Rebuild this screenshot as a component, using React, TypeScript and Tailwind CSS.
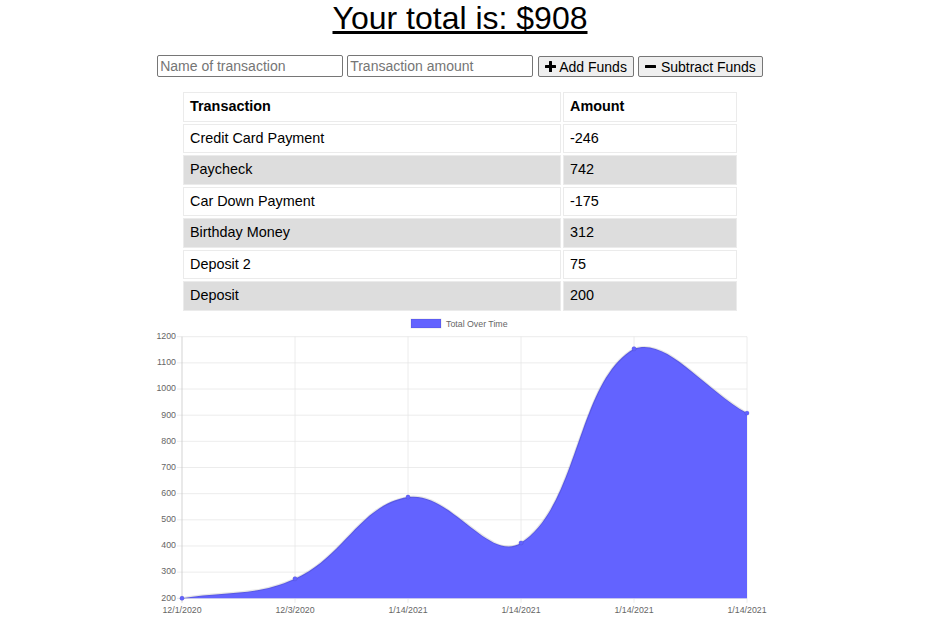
import React from "react";

const rows: [string, string][] = [
  ["Credit Card Payment", "-246"],
  ["Paycheck", "742"],
  ["Car Down Payment", "-175"],
  ["Birthday Money", "312"],
  ["Deposit 2", "75"],
  ["Deposit", "200"],
];

const values = [200, 275, 587, 412, 1154, 908];
const labels = ["12/1/2020", "12/3/2020", "1/14/2021", "1/14/2021", "1/14/2021", "1/14/2021"];

const X0 = 42;
const DX = 113;
const TOP = 22.7;
const BOTTOM = 284.3;
const PER = (BOTTOM - TOP) / 1000;
const yOf = (v: number) => BOTTOM - (v - 200) * PER;

type P = { x: number; y: number };

function spline(prev: P, cur: P, next: P, t: number) {
  const d01 = Math.hypot(cur.x - prev.x, cur.y - prev.y);
  const d12 = Math.hypot(next.x - cur.x, next.y - cur.y);
  let s01 = d01 / (d01 + d12);
  let s12 = d12 / (d01 + d12);
  if (isNaN(s01)) s01 = 0;
  if (isNaN(s12)) s12 = 0;
  const fa = t * s01;
  const fb = t * s12;
  const clamp = (y: number) => Math.min(BOTTOM, Math.max(TOP, y));
  return {
    prev: { x: cur.x - fa * (next.x - prev.x), y: clamp(cur.y - fa * (next.y - prev.y)) },
    next: { x: cur.x + fb * (next.x - prev.x), y: clamp(cur.y + fb * (next.y - prev.y)) },
  };
}

function buildPath() {
  const pts: P[] = values.map((v, i) => ({ x: X0 + DX * i, y: yOf(v) }));
  const cps = pts.map((p, i) =>
    spline(pts[i - 1] ?? p, p, pts[i + 1] ?? p, 0.4)
  );
  let d = `M ${pts[0].x} ${pts[0].y}`;
  for (let i = 1; i < pts.length; i++) {
    const a = cps[i - 1].next;
    const b = cps[i].prev;
    d += ` C ${a.x} ${a.y} ${b.x} ${b.y} ${pts[i].x} ${pts[i].y}`;
  }
  return { pts, line: d, area: `${d} L ${pts[pts.length - 1].x} ${BOTTOM} L ${pts[0].x} ${BOTTOM} Z` };
}

function Chart() {
  const { pts, line, area } = buildPath();
  const yTicks = [200, 300, 400, 500, 600, 700, 800, 900, 1000, 1100, 1200];
  const right = X0 + DX * 5;
  return (
    <svg width={640} height={312} className="block mt-[1px] overflow-visible" style={{ fontFamily: "'Liberation Sans', Arial, sans-serif" }}>
      {/* legend */}
      <rect x={271} y={5} width={30} height={9} fill="#6363ff" stroke="rgba(0,0,0,0.1)" strokeWidth={1} />
      <text x={306} y={12.5} fontSize={8.8} fill="#666">Total Over Time</text>
      {/* horizontal grid */}
      {yTicks.map((v) => (
        <g key={v}>
          <line x1={37} x2={right} y1={yOf(v)} y2={yOf(v)} stroke={v === 200 ? "#d9d9d9" : "#e6e6e6"} strokeWidth={0.75} />
          <text x={36} y={yOf(v)} fontSize={8.8} fill="#666" textAnchor="end" dominantBaseline="middle">{v}</text>
        </g>
      ))}
      {/* vertical grid */}
      {labels.map((l, i) => (
        <g key={i}>
          <line x1={X0 + DX * i} x2={X0 + DX * i} y1={TOP} y2={BOTTOM + 4.5} stroke={i === 0 ? "#c4c4c4" : "#e6e6e6"} strokeWidth={0.75} />
          <text x={X0 + DX * i} y={296.7} fontSize={8.8} fill="#666" textAnchor="middle" dominantBaseline="middle">{l}</text>
        </g>
      ))}
      <path d={area} fill="#6363ff" />
      <path d={line} fill="none" stroke="rgba(0,0,0,0.1)" strokeWidth={2.16} />
      {pts.map((p, i) => (
        <circle key={i} cx={p.x} cy={p.y} r={2.2} fill="#6363ff" stroke="rgba(0,0,0,0.1)" strokeWidth={0.72} />
      ))}
    </svg>
  );
}

function PlusIcon() {
  return (
    <svg width="11" height="11" viewBox="0 0 11 11" className="block">
      <rect x="4" y="0" width="3" height="11" rx="0.5" fill="#000" />
      <rect x="0" y="4" width="11" height="3" rx="0.5" fill="#000" />
    </svg>
  );
}

function MinusIcon() {
  return (
    <svg width="11" height="11" viewBox="0 0 11 11" className="block">
      <rect x="0" y="4" width="11" height="3" rx="0.5" fill="#000" />
    </svg>
  );
}

export default function App() {
  return (
    <div className="w-[920px] flex flex-col items-center bg-white text-black font-['Liberation_Sans',Arial,sans-serif]">
      <h1 className="m-0 text-[32px] leading-[37px] font-normal underline">Your total is: $908</h1>
      <div className="mt-[18px] flex items-start gap-[4px]">
        <input
          type="text"
          placeholder="Name of transaction"
          className="w-[186px] h-[22px] border border-[#767676] rounded-[2px] px-[2px] text-[14px] outline-none placeholder:text-[#757575]"
        />
        <input
          type="text"
          placeholder="Transaction amount"
          className="w-[186px] h-[22px] border border-[#767676] rounded-[2px] px-[2px] text-[14px] outline-none placeholder:text-[#757575]"
        />
        <button className="ml-[1px] mt-[1px] h-[21px] flex items-center gap-[3px] px-[6px] border border-[#767676] rounded-[2px] bg-[#efefef] text-[14px] leading-none text-black">
          <PlusIcon />
          <span>Add Funds</span>
        </button>
        <button className="mt-[1px] h-[21px] flex items-center gap-[5px] px-[6px] border border-[#767676] rounded-[2px] bg-[#efefef] text-[14px] leading-none text-black">
          <MinusIcon />
          <span>Subtract Funds</span>
        </button>
      </div>
      <table className="mt-[13px] w-[558px] border-separate border-spacing-[2px] text-[14.4px]">
        <thead>
          <tr>
            <th className="w-[378px] border border-[#ebebeb] px-[6px] py-[5px] leading-[17.5px] text-left font-bold">Transaction</th>
            <th className="border border-[#ebebeb] px-[6px] py-[5px] leading-[17.5px] text-left font-bold">Amount</th>
          </tr>
        </thead>
        <tbody>
          {rows.map(([name, amt], i) => (
            <tr key={i} className={i % 2 === 1 ? "bg-[#dddddd]" : "bg-white"}>
              <td className="border border-[#ebebeb] px-[6px] py-[5px] leading-[17.5px]">{name}</td>
              <td className="border border-[#ebebeb] px-[6px] py-[5px] leading-[17.5px]">{amt}</td>
            </tr>
          ))}
        </tbody>
      </table>
      <Chart />
    </div>
  );
}
